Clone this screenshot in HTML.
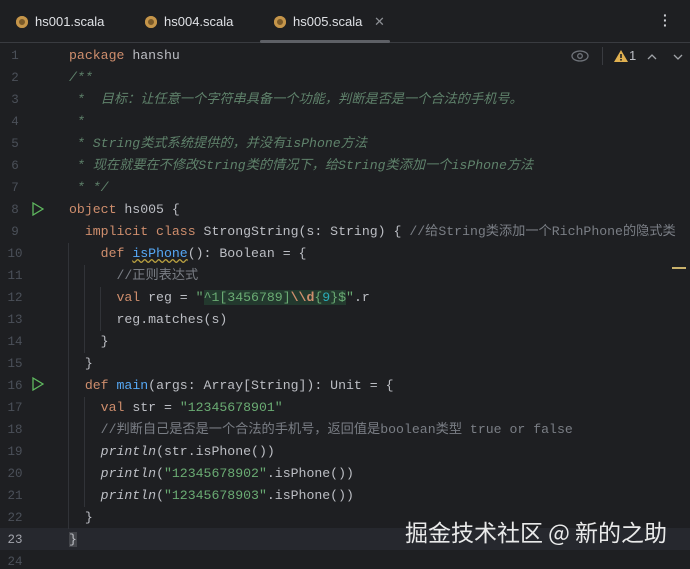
<!DOCTYPE html>
<html><head><meta charset="utf-8"><style>
body{margin:0;width:690px;height:563px;background:#1e1f22;overflow:hidden;font-family:"Liberation Sans","Noto Sans CJK SC",sans-serif;position:relative}
.tabs{position:absolute;left:0;top:0;width:690px;height:42px;background:#1e1f22;border-bottom:1px solid #393b40}
.tab{position:absolute;top:14px;color:#dfe1e5;font-size:13px}
.tab i{display:inline-block;width:12px;height:12px;border-radius:50%;background:#c5954a;vertical-align:-2px;margin-right:7px;box-shadow:inset 0 0 0 3px #c5954a,inset 0 0 0 6px #7a5a2a}
.ul{position:absolute;left:260px;top:40px;width:130px;height:3px;background:#5e6066;border-radius:2px}
.code{position:absolute;left:0;top:45px;width:690px}
.ln{position:absolute;left:0;width:30px;text-align:center;color:#4b5059;font:12.5px "Liberation Mono",monospace}
.l{position:absolute;left:69px;white-space:pre;font:13.2px "Liberation Mono","Noto Sans CJK SC",monospace;color:#bcbec4;height:22px;line-height:22px}
.k{color:#cf8e6d}.s{color:#6aab73}.n{color:#2aacb8}.f{color:#56a8f5}.c{color:#7a7e85;font-family:"Liberation Mono","Noto Sans CJK SC",monospace}.d{color:#5f826b;font-style:italic}.it{font-style:italic}
.cur{position:absolute;left:0;top:528px;width:690px;height:22px;background:#26282e}
.guide{position:absolute;width:1px;background:#313338}
.wm{position:absolute;left:405px;top:514px;color:#fff;font-size:23px;opacity:.9;font-family:"Noto Sans CJK SC",sans-serif}
</style></head><body>
<div class="tabs">
<div class="tab" style="left:16px"><i></i>hs001.scala</div>
<div class="tab" style="left:145px"><i></i>hs004.scala</div>
<div class="tab" style="left:274px"><i></i>hs005.scala <span style="color:#8c8f94;margin-left:8px">✕</span></div>
<div style="position:absolute;left:663px;top:13px;color:#ced0d6;font-size:14px;line-height:5px;width:4px;font-weight:bold">·<br>·<br>·</div>
</div>
<div class="ul"></div>
<div class="cur"></div>
<div class="guide" style="left:68px;top:243px;height:286px"></div>
<div class="guide" style="left:84px;top:265px;height:88px"></div>
<div class="guide" style="left:100px;top:287px;height:44px"></div>
<div class="guide" style="left:84px;top:397px;height:110px"></div>
<svg style="position:absolute;left:571px;top:49px" width="20" height="14"><ellipse cx="9" cy="7" rx="8" ry="5" fill="none" stroke="#6f737a" stroke-width="1.3"/><circle cx="9" cy="7" r="2.3" fill="none" stroke="#6f737a" stroke-width="1.3"/></svg>
<div style="position:absolute;left:602px;top:47px;width:1px;height:18px;background:#393b40"></div>
<svg style="position:absolute;left:614px;top:50px" width="14" height="12"><path d="M7 0L14 12H0Z" fill="#e0b050"/><rect x="6.2" y="4" width="1.6" height="4" fill="#1e1f22"/><rect x="6.2" y="9" width="1.6" height="1.6" fill="#1e1f22"/></svg>
<div style="position:absolute;left:629px;top:48px;color:#bcbec4;font-size:13px">1</div>
<svg style="position:absolute;left:647px;top:52px" width="36" height="10"><path d="M1 7L5 3L9 7M27 3L31 7L35 3" fill="none" stroke="#a0a3a8" stroke-width="1.3"/></svg>
<div style="position:absolute;left:672px;top:267px;width:14px;height:2px;background:#c9b16b"></div>
<svg style="position:absolute;left:32px;top:202px" width="12" height="14"><path d="M1 1L11 7L1 13Z" fill="none" stroke="#5fb85f" stroke-width="1.3"/></svg>
<svg style="position:absolute;left:32px;top:377px" width="12" height="14"><path d="M1 1L11 7L1 13Z" fill="none" stroke="#5fb85f" stroke-width="1.3"/></svg>
<div class="code">
<div class="ln" style="top:4px">1</div><div class="ln" style="top:26px">2</div><div class="ln" style="top:48px">3</div><div class="ln" style="top:70px">4</div><div class="ln" style="top:92px">5</div><div class="ln" style="top:114px">6</div><div class="ln" style="top:136px">7</div><div class="ln" style="top:158px">8</div><div class="ln" style="top:180px">9</div><div class="ln" style="top:202px">10</div><div class="ln" style="top:224px">11</div><div class="ln" style="top:246px">12</div><div class="ln" style="top:268px">13</div><div class="ln" style="top:290px">14</div><div class="ln" style="top:312px">15</div><div class="ln" style="top:334px">16</div><div class="ln" style="top:356px">17</div><div class="ln" style="top:378px">18</div><div class="ln" style="top:400px">19</div><div class="ln" style="top:422px">20</div><div class="ln" style="top:444px">21</div><div class="ln" style="top:466px">22</div><div class="ln" style="top:488px;color:#a1a3ab">23</div><div class="ln" style="top:510px">24</div>
<div class="l" style="top:0"><span class="k">package</span> hanshu</div>
<div class="l d" style="top:22px">/**</div>
<div class="l d" style="top:44px"> *  目标：让任意一个字符串具备一个功能，判断是否是一个合法的手机号。</div>
<div class="l d" style="top:66px"> *</div>
<div class="l d" style="top:88px"> * String类式系统提供的，并没有isPhone方法</div>
<div class="l d" style="top:110px"> * 现在就要在不修改String类的情况下，给String类添加一个isPhone方法</div>
<div class="l d" style="top:132px"> * */</div>
<div class="l" style="top:154px"><span class="k">object</span> hs005 {</div>
<div class="l" style="top:176px">  <span class="k">implicit class</span> StrongString(s: String) { <span class="c">//给String类添加一个RichPhone的隐式类</span></div>
<div class="l" style="top:198px">    <span class="k">def</span> <span class="f" style="text-decoration:underline wavy #b8a040">isPhone</span>(): Boolean = {</div>
<div class="l" style="top:220px">      <span class="c">//正则表达式</span></div>
<div class="l" style="top:242px">      <span class="k">val</span> reg = <span class="s">"<span style="background:#23392e">^1[3456789]<span style="color:#cf8e6d;font-weight:bold">\\d</span>{<span class="n">9</span>}$</span>"</span>.r</div>
<div class="l" style="top:264px">      reg.matches(s)</div>
<div class="l" style="top:286px">    }</div>
<div class="l" style="top:308px">  }</div>
<div class="l" style="top:330px">  <span class="k">def</span> <span class="f">main</span>(args: Array[String]): Unit = {</div>
<div class="l" style="top:352px">    <span class="k">val</span> str = <span class="s">"12345678901"</span></div>
<div class="l" style="top:374px">    <span class="c">//判断自己是否是一个合法的手机号，返回值是boolean类型 true or false</span></div>
<div class="l" style="top:396px">    <span class="it">println</span>(str.isPhone())</div>
<div class="l" style="top:418px">    <span class="it">println</span>(<span class="s">"12345678902"</span>.isPhone())</div>
<div class="l" style="top:440px">    <span class="it">println</span>(<span class="s">"12345678903"</span>.isPhone())</div>
<div class="l" style="top:462px">  }</div>
<div class="l" style="top:484px"><span style="background:#43454a">}</span></div>
</div>
<div class="wm">掘金技术社区 @ 新的之助</div>
</body></html>
